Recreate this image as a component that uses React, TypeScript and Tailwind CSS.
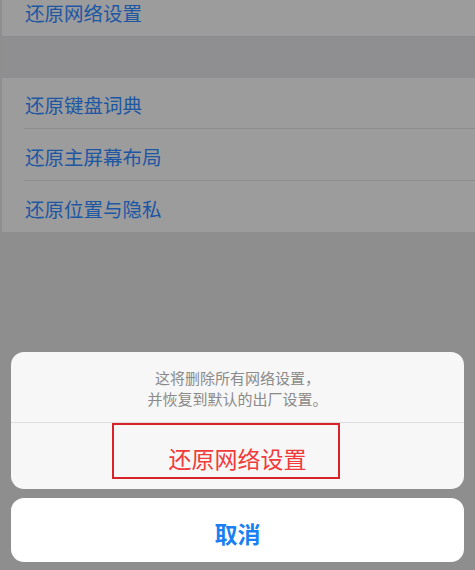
import React from "react";

const font = { fontFamily: '"Noto Sans CJK SC", "Noto Sans", sans-serif' };

export default function App() {
  return (
    <div
      className="w-[475px] h-[570px] bg-[#8e8e8e] flex flex-col overflow-hidden"
      style={font}
    >
      {/* background list (dimmed) */}
      <div className="pl-[2px] flex flex-col">
        <div className="h-[37px] bg-[#9c9c9c] border-b border-[#8a8a8a] flex items-start pl-[23px] pt-px">
          <span className="text-[19.5px] leading-[23px] text-[#1d56a3]">还原网络设置</span>
        </div>
        <div className="h-[41px] bg-[#8f8f91]" />
        <div className="bg-[#9c9c9c] flex flex-col">
          <div className="h-[50px] flex items-center pl-[23px]">
            <span className="text-[19.5px] leading-[24px] text-[#1d56a3] -mb-[4px]">还原键盘词典</span>
          </div>
          <div className="h-px bg-[#8d8d8d] ml-[22px]" />
          <div className="h-[51px] flex items-center pl-[23px]">
            <span className="text-[19.5px] leading-[24px] text-[#1d56a3] -mb-[4px]">还原主屏幕布局</span>
          </div>
          <div className="h-px bg-[#8d8d8d] ml-[22px]" />
          <div className="h-[51px] flex items-center pl-[23px]">
            <span className="text-[19.5px] leading-[24px] text-[#1d56a3] -mb-[4px]">还原位置与隐私</span>
          </div>
        </div>
      </div>

      <div className="flex-1" />

      {/* action sheet */}
      <div className="px-[11px] pb-[8px] flex flex-col gap-[9px]">
        <div className="relative h-[137px] rounded-[13px] bg-[#f7f7f7] flex flex-col">
          <div className="h-[70px] flex flex-col items-center justify-center pt-[2px] text-[15px] leading-[21px] text-[#8a8a8a]">
            <span>这将删除所有网络设置，</span>
            <span>并恢复到默认的出厂设置。</span>
          </div>
          <div className="h-px bg-[#dedede]" />
          <div className="flex-1 flex items-center justify-center">
            <span className="text-[23px] leading-[30px] text-[#f23b3b] mt-[3px]">还原网络设置</span>
          </div>
          <div className="absolute left-[101px] top-[71px] w-[228px] h-[56px] border-2 border-[#d9232a]" />
        </div>
        <div className="h-[64px] rounded-[13px] bg-white flex items-center justify-center">
          <span className="text-[23px] leading-[30px] font-bold text-[#1a7ff2] mt-[5px]">取消</span>
        </div>
      </div>
    </div>
  );
}
